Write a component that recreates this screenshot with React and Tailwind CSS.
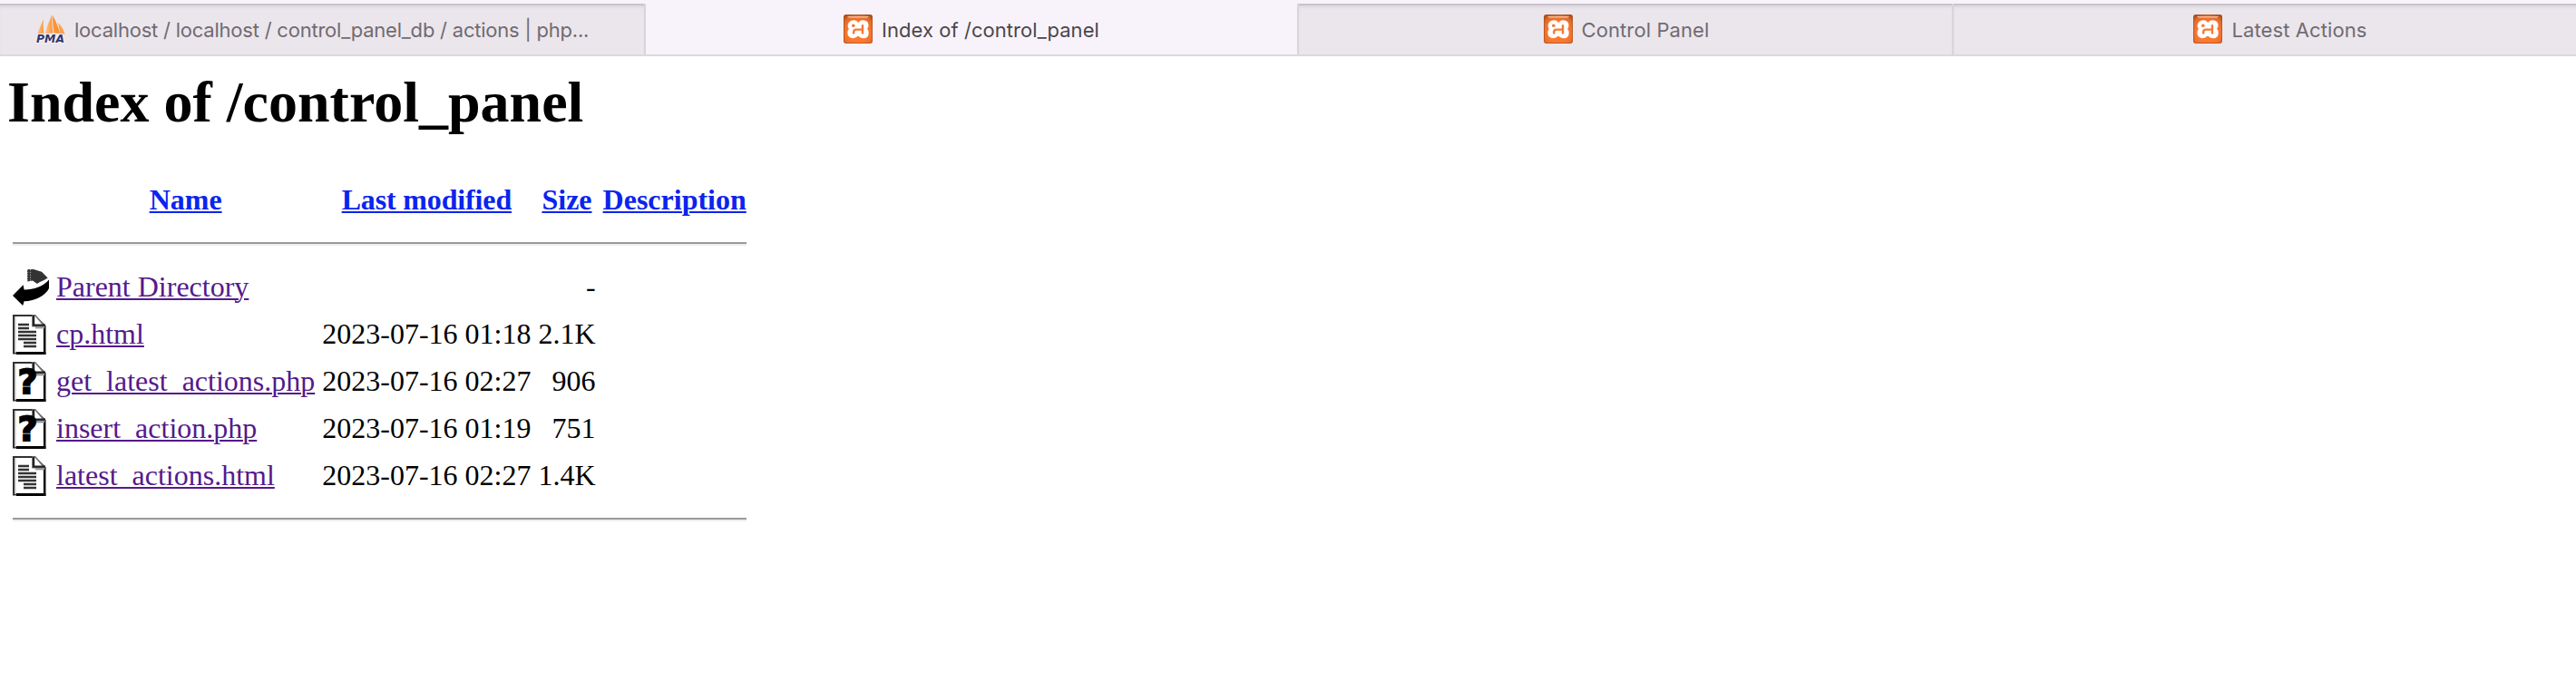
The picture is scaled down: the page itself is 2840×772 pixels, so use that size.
import React from "react";

function XamppIcon() {
  return (
    <svg viewBox="0 0 32 32" className="h-8 w-8 shrink-0">
      <defs>
        <radialGradient id="xo" cx="50%" cy="62%" r="72%">
          <stop offset="0.5" stopColor="#fb7830" />
          <stop offset="0.8" stopColor="#e26c2c" />
          <stop offset="1" stopColor="#a9501f" />
        </radialGradient>
        <linearGradient id="xs" x1="0" y1="0" x2="0" y2="1">
          <stop offset="0" stopColor="#f6c6a6" />
          <stop offset="1" stopColor="#e58a58" />
        </linearGradient>
      </defs>
      <rect width="32" height="32" rx="3" fill="url(#xo)" />
      <rect x="0.5" y="0.5" width="31" height="31" rx="2.5" fill="none" stroke="#a8501f" strokeOpacity="0.7" />
      <path d="M4 2h24l-2 2H6z" fill="url(#xs)" />
      <path
        d="M16 12.600C15 9.400 13.200 8 11 8C8.300 8 6.400 9.800 6.400 12.200C6.400 13.800 7.400 15.100 8.900 15.900C7.100 17 6.200 18.400 6.200 20.200C6.200 22.800 7.900 24.400 10.200 24.400C12.700 24.400 14.600 22.800 16 19.800C17.400 22.800 19.300 24.400 21.700 24.400C24.300 24.400 25.900 22.700 25.900 20.200C25.900 18.400 25 17 23.200 15.900C24.800 14.900 25.700 13.700 25.700 12C25.700 9.600 24.200 8 21.800 8C19.400 8 17.400 9.400 16 12.600Z"
        fill="#fff"
        stroke="#fff"
        strokeWidth="3.600"
        strokeLinejoin="round"
      />
      <path d="M11.200 20.600V19.400C11.200 17.600 12 16.600 13.800 16.600H20.800M21 12.300V20.400" fill="none" stroke="#f97730" strokeWidth="2.400" strokeLinecap="round" />
      <circle cx="10.800" cy="12.200" r="1.800" fill="#f97730" />
    </svg>
  );
}

function PmaIcon() {
  return (
    <svg viewBox="0 0 32 32" className="h-8 w-8 shrink-0 overflow-visible">
      <defs>
        <linearGradient id="sail" x1="0" y1="0" x2="1" y2="0">
          <stop offset="0" stopColor="#fdc58d" />
          <stop offset="1" stopColor="#f99334" />
        </linearGradient>
      </defs>
      <path d="M8 5C6 10 3 16 1 22L8.500 20.500C7.500 15 7.500 10 8 5Z" fill="url(#sail)" />
      <path d="M17.500 0C14.500 7 11 14 10 21L18.500 20.500C17.300 14 17 7 17.500 0Z" fill="url(#sail)" />
      <path d="M18.200 1C22 8 25 15 26 21L19.800 20.500C18.500 15 17.800 8 18.200 1Z" fill="#f99334" />
      <path d="M24 9C28 13 30.500 17 31.500 22L26 20.500C25.600 16 25 13 24 9Z" fill="#fba14d" />
      <text x="0" y="30.600" fontFamily="DejaVu Sans, sans-serif" fontWeight="700" fontStyle="italic" fontSize="12.500" textLength="31" lengthAdjust="spacingAndGlyphs" fill="#33366b" stroke="#fff" strokeWidth="2" strokeOpacity="0.600" paintOrder="stroke">
        PMA
      </text>
    </svg>
  );
}

function Sheet({ children }) {
  return (
    <svg viewBox="0 0 20 22" className="block h-11 w-10">
      <path d="M0.500 0.500H12L17.500 6V21.300H0.500Z" fill="#fff" stroke="#333" strokeWidth="1" />
      <path d="M1.400 1V20.700" stroke="#ccc" strokeWidth="0.800" />
      <path d="M2 21.200H18.200" stroke="#000" strokeWidth="1.500" />
      <path d="M17.600 6V22" stroke="#111" strokeWidth="1.300" />
      <path d="M11 6.400V0.500H12.500L17.500 6.400Z" fill="#fff" stroke="#777" strokeWidth="0.800" />
      <path d="M11.500 0.500V5.800H18" fill="none" stroke="#222" strokeWidth="1.200" />
      <path d="M12.500 7.100H17.500" stroke="#999" strokeWidth="1.200" />
      {children}
    </svg>
  );
}

function TextIcon() {
  return (
    <Sheet>
      <path d="M3 5.500H9M3 7.500H9M3 9.500H13M3 11.500H13M3 13.500H13M6 15.500H13M6 17.500H13" stroke="#333" strokeWidth="1.200" />
    </Sheet>
  );
}

function UnknownIcon() {
  return (
    <Sheet>
      <text x="2.700" y="17.700" fontFamily="DejaVu Sans, sans-serif" fontWeight="700" fontSize="19" textLength="11" lengthAdjust="spacingAndGlyphs" fill="#000" stroke="#000" strokeWidth="0.900">
        ?
      </text>
    </Sheet>
  );
}

function BackIcon() {
  return (
    <svg viewBox="0 0 20 22" className="block h-11 w-10">
      <path d="M8 1H11.500L16 2.400L19.300 5.800C17.500 7.200 15.500 7.500 13.500 9L11 7.300L8 7.800Z" fill="#333" />
      <path d="M8.300 1V8M9.800 1V7.500" stroke="#aaa" strokeWidth="0.500" strokeDasharray="0.700 0.700" />
      <path d="M0 15.500L5.800 9.600L6.300 12.200C11 12.300 17 10.500 20 6.700V11.500C18 15.500 12.500 18.600 6.300 18.600L5.600 21Z" fill="#000" />
    </svg>
  );
}

const icons = { back: BackIcon, text: TextIcon, unknown: UnknownIcon };

const rows = [
  { icon: "back", name: "Parent Directory", date: "", size: "-" },
  { icon: "text", name: "cp.html", date: "2023-07-16 01:18", size: "2.1K" },
  { icon: "unknown", name: "get_latest_actions.php", date: "2023-07-16 02:27", size: "906" },
  { icon: "unknown", name: "insert_action.php", date: "2023-07-16 01:19", size: "751" },
  { icon: "text", name: "latest_actions.html", date: "2023-07-16 02:27", size: "1.4K" },
];

const inactive =
  "flex h-full shrink-0 items-center border-[#d8d4da] bg-[#ebe6ec] text-[#706b72] shadow-[inset_0_2px_0_#c9c4cb,inset_0_5px_4px_-2px_#d4cfd6]";

const cell = "px-0.5 pt-px pb-[3px]";

function Rule() {
  return (
    <tr>
      <th colSpan={5} className="p-0.5">
        <div className="my-4 h-1 border-y-2 border-t-[#9a9a9a] border-b-[#eeeeee]" />
      </th>
    </tr>
  );
}

function Heading({ children }) {
  return (
    <th className={cell + " text-center font-bold"}>
      <a className="text-[#0b24ee] underline decoration-2 underline-offset-2">{children}</a>
    </th>
  );
}

export default function App() {
  return (
    <div className="h-[772px] w-full overflow-hidden bg-white">
      <nav className="flex h-[62px] overflow-hidden border-b-2 border-[#dcd9dd] bg-[#f8f3fa] font-['Inter',sans-serif] text-[22px] leading-7 whitespace-nowrap">
        <div className="flex h-full w-[712px] shrink-0 pt-1">
          <div className={inactive + " w-full gap-[10px] border-r-2 pl-10"}>
            <PmaIcon />
            <span className="pt-0.5 tracking-[-0.22px]">localhost / localhost / control_panel_db / actions | php...</span>
          </div>
        </div>
        <div className="flex h-full w-[718px] shrink-0 items-center justify-center gap-[10px] pt-1 text-[#4a474c]">
          <XamppIcon />
          <span className="pt-0.5 tracking-[0.05px]">Index of /control_panel</span>
        </div>
        <div className="flex h-full w-[724px] shrink-0 pt-1">
          <div className={inactive + " w-full justify-center gap-[10px] border-x-2 pl-0.5"}>
            <XamppIcon />
            <span className="pt-0.5 tracking-[0.1px]">Control Panel</span>
          </div>
        </div>
        <div className="flex h-full w-[720px] shrink-0 pt-1">
          <div className={inactive + " w-full justify-center gap-[10px]"}>
            <XamppIcon />
            <span className="pt-0.5 tracking-[0.1px]">Latest Actions</span>
          </div>
        </div>
      </nav>
      <main className="px-2 pt-[14px] font-['Liberation_Serif',serif] text-[32px] leading-[37px] text-black">
        <h1 className="mb-[43px] text-[64px] leading-[74px] font-bold">Index of /control_panel</h1>
        <table className="border-separate border-spacing-1 whitespace-nowrap">
          <tbody>
            <tr className="h-12">
              <th className="p-0.5" />
              <Heading>Name</Heading>
              <Heading>
                <span className="tracking-[-0.15px]">Last modified</span>
              </Heading>
              <Heading>Size</Heading>
              <Heading>Description</Heading>
            </tr>
            <Rule />
            {rows.map((r) => {
              const Icon = icons[r.icon];
              return (
                <tr key={r.name}>
                  <td className="p-0.5 align-top">
                    <Icon />
                  </td>
                  <td className={cell}>
                    <a className="text-[#551a8b] underline decoration-2 underline-offset-2">{r.name}</a>
                  </td>
                  <td className={cell + " text-right"}>{r.date}</td>
                  <td className={cell + " text-right"}>{r.size}</td>
                  <td className={cell} />
                </tr>
              );
            })}
            <Rule />
          </tbody>
        </table>
      </main>
    </div>
  );
}
